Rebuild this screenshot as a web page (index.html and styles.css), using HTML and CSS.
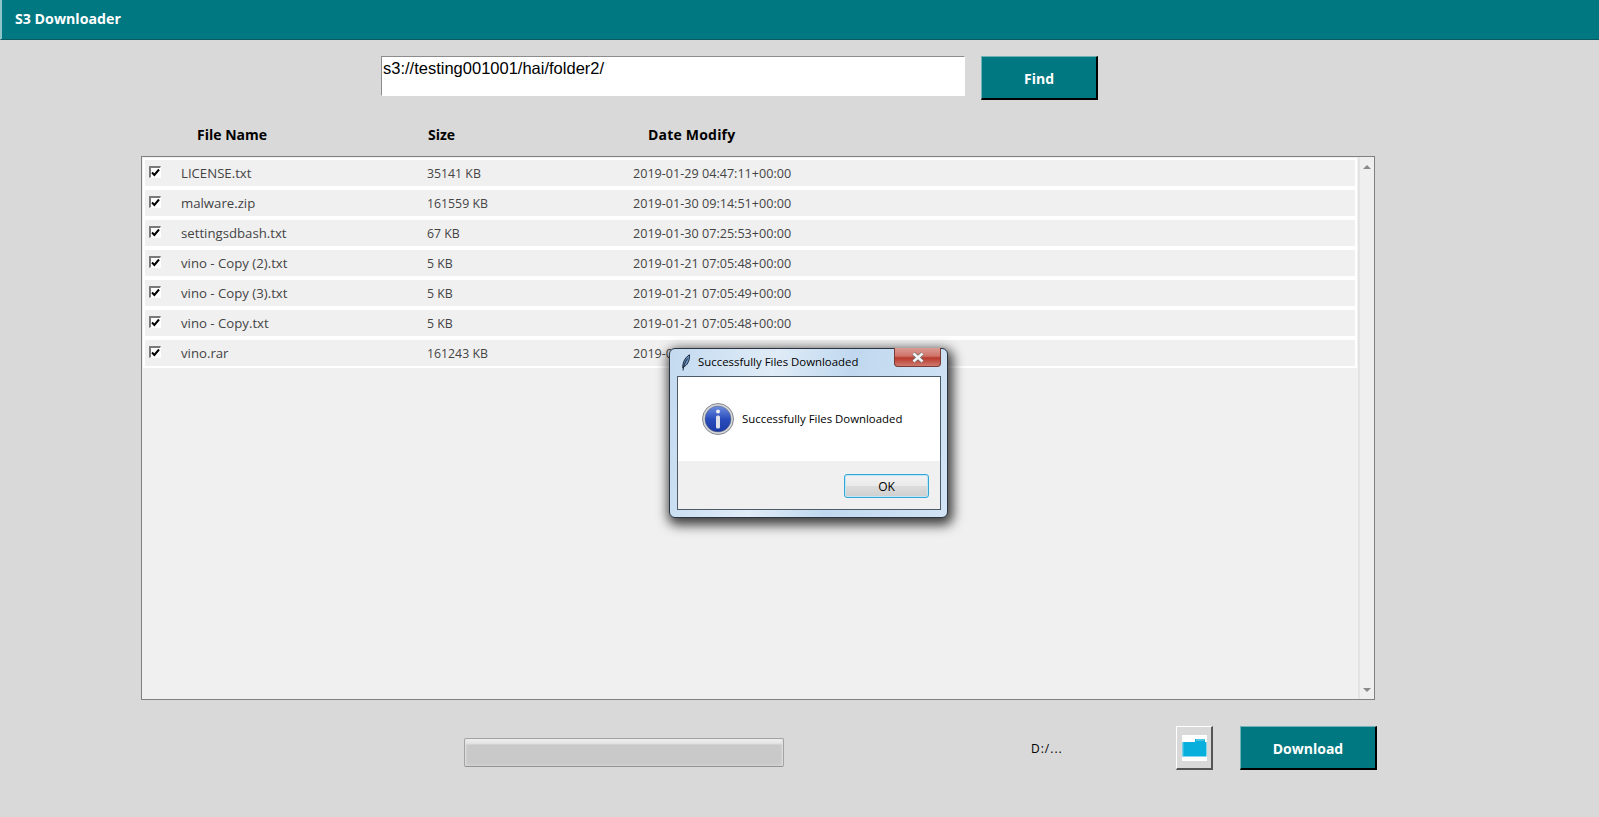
FILE: index.html
```html
<!DOCTYPE html>
<html lang="en">
<head>
    <meta charset="UTF-8">
    <meta name="viewport" content="width=device-width, initial-scale=1.0">
    <title>S3 Downloader</title>
    <link rel="stylesheet" href="styles.css">
</head>
<body>

<header class="app-bar">S3 Downloader</header>

<div class="search-row">
    <input class="search-input" type="text" value="s3://testing001001/hai/folder2/">
    <button class="teal-btn find-btn">Find</button>
</div>

<div class="col-heads">
    <span>File Name</span>
    <span>Size</span>
    <span class="date-head">Date Modify</span>
</div>

<div class="list-box">
    <div class="rows">
        <div class="row"><span class="check"><svg viewBox="0 0 9 9"><path d="M1 4.5 L3.4 7 L8 1.5" fill="none" stroke="#000" stroke-width="2"/></svg></span><span class="name">LICENSE.txt</span><span class="size">35141 KB</span><span class="date">2019-01-29 04:47:11+00:00</span></div>
        <div class="row"><span class="check"><svg viewBox="0 0 9 9"><path d="M1 4.5 L3.4 7 L8 1.5" fill="none" stroke="#000" stroke-width="2"/></svg></span><span class="name">malware.zip</span><span class="size">161559 KB</span><span class="date">2019-01-30 09:14:51+00:00</span></div>
        <div class="row"><span class="check"><svg viewBox="0 0 9 9"><path d="M1 4.5 L3.4 7 L8 1.5" fill="none" stroke="#000" stroke-width="2"/></svg></span><span class="name">settingsdbash.txt</span><span class="size">67 KB</span><span class="date">2019-01-30 07:25:53+00:00</span></div>
        <div class="row"><span class="check"><svg viewBox="0 0 9 9"><path d="M1 4.5 L3.4 7 L8 1.5" fill="none" stroke="#000" stroke-width="2"/></svg></span><span class="name">vino - Copy (2).txt</span><span class="size">5 KB</span><span class="date">2019-01-21 07:05:48+00:00</span></div>
        <div class="row"><span class="check"><svg viewBox="0 0 9 9"><path d="M1 4.5 L3.4 7 L8 1.5" fill="none" stroke="#000" stroke-width="2"/></svg></span><span class="name">vino - Copy (3).txt</span><span class="size">5 KB</span><span class="date">2019-01-21 07:05:49+00:00</span></div>
        <div class="row"><span class="check"><svg viewBox="0 0 9 9"><path d="M1 4.5 L3.4 7 L8 1.5" fill="none" stroke="#000" stroke-width="2"/></svg></span><span class="name">vino - Copy.txt</span><span class="size">5 KB</span><span class="date">2019-01-21 07:05:48+00:00</span></div>
        <div class="row"><span class="check"><svg viewBox="0 0 9 9"><path d="M1 4.5 L3.4 7 L8 1.5" fill="none" stroke="#000" stroke-width="2"/></svg></span><span class="name">vino.rar</span><span class="size">161243 KB</span><span class="date">2019-01-21 07:05:49+00:00</span></div>
    </div>
    <div class="scrollbar">
        <span class="arrow-up"></span>
        <span class="arrow-down"></span>
    </div>
</div>

<div class="bottom-row">
    <div class="progress"></div>
    <span class="path">D:/...</span>
    <button class="folder-btn">
        <svg width="25" height="26" viewBox="0 0 25 26">
            <rect width="25" height="26" fill="#fff"/>
            <path d="M13 4 H22 Q23 4 23 5 V7 H13 Z" fill="#07afdc"/>
            <path d="M14 5 H22" stroke="#8fd9ee" stroke-width="1"/>
            <rect x="0.500" y="7" width="24" height="14.500" fill="#07afdc"/>
            <path d="M1 7 V21.500" stroke="#5ccbe8" stroke-width="1"/>
        </svg>
    </button>
    <button class="teal-btn download-btn">Download</button>
</div>

<div class="dialog">
    <div class="dialog-title">
        <svg class="feather" width="8" height="17" viewBox="0 0 8 17">
            <path d="M0.800 14 C0.500 10 2 4 7.500 0.800 C7.800 5 6.500 10 2.500 12.500 Z" fill="#6d93c2" stroke="#0d1a2b" stroke-width="0.900"/>
            <path d="M1 16.500 C1.500 12 3 8 5.500 4.500" fill="none" stroke="#0d1a2b" stroke-width="0.900"/>
        </svg>
        <span>Successfully Files Downloaded</span>
        <div class="close-btn">
            <svg width="14" height="11" viewBox="0 0 14 11"><path d="M2.500 1.500 L11.500 9.500 M11.500 1.500 L2.500 9.500" stroke="#6b6b6b" stroke-width="4"/><path d="M2.500 1.500 L11.500 9.500 M11.500 1.500 L2.500 9.500" stroke="#f4f4f4" stroke-width="2.600"/></svg>
        </div>
    </div>
    <div class="dialog-body">
        <div class="dialog-msg">
            <svg class="info-icon" width="32" height="32" viewBox="0 0 32 32">
                <defs>
                    <linearGradient id="info-fill" x1="0" y1="0" x2="0" y2="1">
                        <stop offset="0" stop-color="#6f8fe0"/>
                        <stop offset="0.500" stop-color="#2a4dbd"/>
                        <stop offset="1" stop-color="#1a3aa6"/>
                    </linearGradient>
                </defs>
                <circle cx="16" cy="16" r="15.500" fill="#d4d6da" stroke="#85888f"/>
                <circle cx="16" cy="16" r="13" fill="url(#info-fill)" stroke="#5c6470" stroke-width="0.500"/>
                <circle cx="16" cy="8.500" r="2" fill="#eef0f4"/>
                <rect x="14" y="12.500" width="4" height="13" rx="1.500" fill="#dfe2e8"/>
            </svg>
            <span>Successfully Files Downloaded</span>
        </div>
        <div class="dialog-foot">
            <button class="ok-btn">OK</button>
        </div>
    </div>
</div>

</body>
</html>
```

FILE: styles.css
```css
body {
    font-family: 'Open Sans', 'Noto Sans', sans-serif;
    background-color: #d9d9d9;
    color: #000;
    margin: 0;
    padding: 0;
    height: 817px;
    overflow: hidden;
}
button {
    font-family: inherit;
    cursor: pointer;
}
.app-bar {
    height: 39px;
    line-height: 38px;
    padding-left: 14px;
    background-color: #007882;
    border-left: 1px solid #8fc4c9;
    border-bottom: 1px solid #0c5a61;
    box-shadow: inset 1px 0 0 #8fc4c9;
    color: #fff;
    font-size: 14.200px;
    font-weight: 700;
}
.search-row {
    display: flex;
    align-items: flex-start;
    gap: 16px;
    margin-top: 16px;
    padding-left: 381px;
}
.search-input {
    box-sizing: border-box;
    width: 584px;
    height: 40px;
    padding: 0 0 16px 1px;
    border: 1px solid #fff;
    border-top-color: #8c8c8c;
    border-left-color: #8c8c8c;
    background-color: #fff;
    color: #000;
    font-family: 'Liberation Sans', sans-serif;
    font-size: 16.500px;
    outline: none;
}
.teal-btn {
    box-sizing: border-box;
    background-color: #007882;
    border: 1px solid #000;
    border-top-color: #6fb2b8;
    border-left-color: #6fb2b8;
    border-width: 1px 2px 2px 1px;
    color: #fff;
    font-weight: 700;
    font-size: 14px;
    padding: 1px 0 0 0;
}
.find-btn {
    width: 117px;
    height: 44px;
}
.col-heads {
    display: grid;
    grid-template-columns: 231px 220px 1fr;
    margin-top: 25px;
    padding-left: 197px;
    height: 31px;
    line-height: 20px;
    font-size: 14px;
    font-weight: 700;
}
.date-head {
    letter-spacing: 0.200px;
}
.list-box {
    box-sizing: border-box;
    display: flex;
    width: 1234px;
    height: 544px;
    margin-left: 141px;
    background-color: #f0f0f0;
    border: 1px solid #fff;
    border-top-color: #808080;
    border-left-color: #808080;
    outline: 1px solid #808080;
    outline-offset: -1px;
}
.rows {
    width: 1216px;
    padding: 3px 0 0 3px;
    box-sizing: border-box;
}
.row {
    display: grid;
    grid-template-columns: 37px 245px 206px 1fr;
    align-items: center;
    height: 26px;
    margin-bottom: 4px;
    background-color: #f0f0f0;
    box-shadow: 0 0 0 2px #fff;
    width: 1210px;
    color: #444;
}
.name {
    font-size: 13.200px;
    margin-left: -1px;
}
.size {
    font-size: 12.300px;
}
.date {
    font-size: 12.600px;
}
.check {
    box-sizing: border-box;
    display: flex;
    align-items: center;
    justify-content: center;
    width: 12px;
    height: 12px;
    margin: -2px 0 0 4px;
    background-color: #fff;
    border: 1px solid #fff;
    border-top: 2px solid #7a7a7a;
    border-left: 2px solid #7a7a7a;
}
.check svg {
    width: 9px;
    height: 9px;
}
.scrollbar {
    flex: 1;
    display: flex;
    flex-direction: column;
    justify-content: space-between;
    align-items: center;
    padding: 8px 0 7px;
    background-color: #efefef;
    border-left: 2px solid #e4e4e4;
}
.arrow-up {
    border: 4px solid transparent;
    border-top: 0;
    border-bottom: 4px solid #8a8a8a;
}
.arrow-down {
    border: 4px solid transparent;
    border-bottom: 0;
    border-top: 4px solid #8a8a8a;
}
.bottom-row {
    display: flex;
    align-items: center;
    margin-top: 26px;
    padding-left: 464px;
}
.progress {
    box-sizing: border-box;
    width: 320px;
    height: 29px;
    margin-top: 8px;
    margin-right: 247px;
    border: 1px solid #a3a3a3;
    border-bottom-color: #949494;
    border-radius: 2px;
    background-color: #d9d9d9;
    background-image: linear-gradient(#eeeeee 0, #e6e6e6 4px, #dcdcdc 5px, #c9c9c9 6px, #c9c9c9 24px, #d0d0d0 100%);
    box-shadow: inset 2px 0 2px -1px #e2e2e2, inset -2px 0 2px -1px #e2e2e2;
}
.path {
    width: 145px;
    font-size: 12px;
    letter-spacing: 1px;
}
.folder-btn {
    box-sizing: border-box;
    width: 37px;
    height: 44px;
    padding: 0;
    display: flex;
    align-items: center;
    justify-content: center;
    margin-right: 27px;
    background-color: #d9d9d9;
    border: 1px solid #fff;
    border-right: 2px solid #555;
    border-bottom: 2px solid #555;
}
.download-btn {
    width: 137px;
    height: 44px;
}
.dialog {
    position: absolute;
    left: 669px;
    top: 348px;
    box-sizing: border-box;
    width: 279px;
    height: 170px;
    padding: 0 6px 8px 7px;
    border: 1px solid #2b3440;
    border-radius: 6px;
    background-color: #c6dcf2;
    background-image: linear-gradient(100deg, #c3daf0 0, #e0ecf7 35%, #c0d8ef 60%, #d2e4f5 100%);
    box-shadow: 2px 4px 12px 3px rgba(0, 0, 0, 0.75);
}
.dialog-title {
    display: flex;
    align-items: center;
    box-sizing: border-box;
    height: 27px;
    padding-bottom: 2px;
    font-size: 11.400px;
    color: #000;
}
.feather {
    margin: 2px 8px 0 5px;
}
.close-btn {
    position: absolute;
    top: -1px;
    right: 6px;
    display: flex;
    align-items: center;
    justify-content: center;
    width: 47px;
    height: 19px;
    border: 1px solid #7a3a38;
    border-top: 0;
    border-radius: 0 0 4px 4px;
    box-sizing: border-box;
    background: linear-gradient(#dc9c92 0, #cf7369 45%, #b8392c 55%, #d07a6e 100%);
}
.dialog-body {
    box-sizing: border-box;
    height: 134px;
    border: 1px solid #4d5a68;
    background-color: #f0f0f0;
    font-size: 11.400px;
}
.dialog-msg {
    display: flex;
    align-items: center;
    box-sizing: border-box;
    height: 84px;
    padding-left: 24px;
    background-color: #fff;
    color: #000;
}
.dialog-msg span {
    margin-top: -2px;
}
.info-icon {
    margin-right: 8px;
}
.dialog-foot {
    display: flex;
    justify-content: flex-end;
    padding: 13px 11px 0 0;
}
.ok-btn {
    box-sizing: border-box;
    width: 85px;
    height: 24px;
    padding: 0;
    border: 1px solid #33a8d8;
    border-radius: 3px;
    box-shadow: inset 0 0 0 1px #bfe6f5;
    background: linear-gradient(#f2f2f2 0, #ebebeb 48%, #dcdcdc 52%, #cfcfcf 100%);
    color: #000;
    font-size: 12px;
}
```
